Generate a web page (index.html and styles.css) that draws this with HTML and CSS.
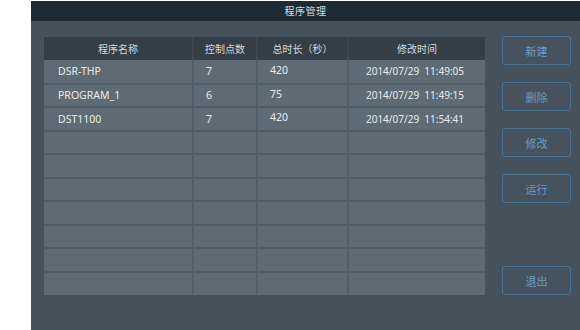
FILE: index.html
```html
<!DOCTYPE html>
<html lang="zh-CN">
<head>
    <meta charset="UTF-8">
    <meta name="viewport" content="width=device-width, initial-scale=1.0">
    <title>程序管理</title>
    <link rel="stylesheet" href="styles.css">
</head>
<body>

<div class="panel">
    <div class="title-bar">程序管理</div>
    <div class="content">
        <table class="program-table">
            <colgroup>
                <col class="col-name">
                <col class="col-points">
                <col class="col-time">
                <col class="col-date">
            </colgroup>
            <thead>
                <tr>
                    <th>程序名称</th>
                    <th>控制点数</th>
                    <th>总时长（秒）</th>
                    <th>修改时间</th>
                </tr>
            </thead>
            <tbody>
                <tr>
                    <td class="name">DSR-THP</td>
                    <td>7</td>
                    <td class="duration">420</td>
                    <td class="date">2014/07/29&nbsp;&nbsp;11:49:05</td>
                </tr>
                <tr>
                    <td class="name">PROGRAM_1</td>
                    <td>6</td>
                    <td class="duration">75</td>
                    <td class="date">2014/07/29&nbsp;&nbsp;11:49:15</td>
                </tr>
                <tr>
                    <td class="name">DST1100</td>
                    <td>7</td>
                    <td class="duration">420</td>
                    <td class="date">2014/07/29&nbsp;&nbsp;11:54:41</td>
                </tr>
                <tr><td></td><td></td><td></td><td></td></tr>
                <tr><td></td><td></td><td></td><td></td></tr>
                <tr><td></td><td></td><td></td><td></td></tr>
                <tr><td></td><td></td><td></td><td></td></tr>
                <tr><td></td><td></td><td></td><td></td></tr>
                <tr><td></td><td></td><td></td><td></td></tr>
                <tr><td></td><td></td><td></td><td></td></tr>
            </tbody>
        </table>

        <div class="actions">
            <button>新建</button>
            <button>删除</button>
            <button>修改</button>
            <button>运行</button>
            <button class="exit">退出</button>
        </div>
    </div>
</div>

</body>
</html>
```

FILE: styles.css
```css
body {
    margin: 0;
    background-color: #ffffff;
    font-family: "Noto Sans", "Noto Sans CJK SC", sans-serif;
}

.panel {
    margin: 1px 0 0 31px;
    width: 549px;
    height: 329px;
    background-color: #45525c;
    display: flex;
    flex-direction: column;
}

.title-bar {
    height: 20px;
    line-height: 20px;
    background-color: #1f2b34;
    color: #d6dde2;
    font-size: 10px;
    letter-spacing: 0.5px;
    text-align: center;
}

.content {
    display: flex;
    padding: 16px 9px 0 13px;
    gap: 17px;
}

.program-table {
    width: 441px;
    height: 258px;
    table-layout: fixed;
    border-collapse: collapse;
    font-size: 10.5px;
    line-height: 14px;
    color: #e6ebee;
}

.col-name { width: 149px; }
.col-points { width: 64px; }
.col-time { width: 91px; }
.col-date { width: 137px; }

.program-table thead tr {
    height: 23px;
}

.program-table tbody tr {
    height: 23.5px;
}

.program-table th {
    padding: 0;
    background-color: #333e47;
    color: #d3dade;
    font-size: 10px;
    font-weight: normal;
    border-left: 2px solid #3d4852;
}

.program-table th:first-child {
    border-left: none;
}

.program-table td {
    padding: 0 0 0 12px;
    background-color: #5f6b74;
    border: 2px solid #515d67;
    border-top: none;
    white-space: nowrap;
}

.program-table td:first-child {
    border-left: none;
}

.program-table td:last-child {
    border-right: none;
}

.program-table tbody tr:last-child td {
    border-bottom: none;
}

.program-table td.name {
    padding-left: 14px;
}

.program-table td.duration {
    padding-bottom: 3px;
}

.program-table td.date {
    padding: 0 4px 0 0;
    text-align: center;
    font-size: 10px;
}

.actions {
    display: flex;
    flex-direction: column;
    gap: 17px;
    margin-top: -1px;
}

.actions button {
    width: 69px;
    height: 29px;
    background-color: #46535e;
    border: 1px solid #4b7290;
    border-radius: 3px;
    color: #6b9ac4;
    font-family: "Noto Sans CJK SC", sans-serif;
    font-size: 11px;
    padding: 0;
}

.actions .exit {
    margin-top: 46px;
}
```
